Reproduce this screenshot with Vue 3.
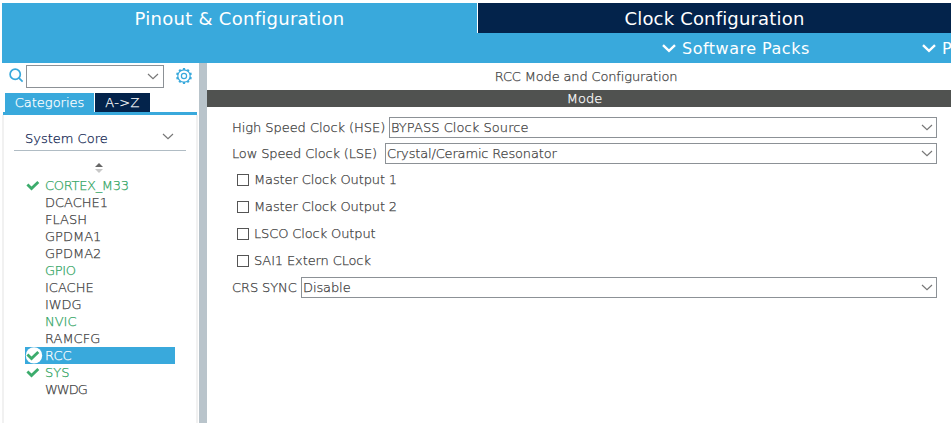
<script setup>
const items = [
  { name: 'CORTEX_M33', on: true, check: true, tight: 'tight-1' },
  { name: 'DCACHE1' },
  { name: 'FLASH' },
  { name: 'GPDMA1' },
  { name: 'GPDMA2' },
  { name: 'GPIO', on: true, tight: 'tight-1' },
  { name: 'ICACHE' },
  { name: 'IWDG', tight: 'tight-2' },
  { name: 'NVIC', on: true },
  { name: 'RAMCFG' },
  { name: 'RCC', selected: true, check: true },
  { name: 'SYS', on: true, check: true },
  { name: 'WWDG', tight: 'tight-3' },
]
const options = ['Master Clock Output 1', 'Master Clock Output 2', 'LSCO Clock Output', 'SAI1 Extern CLock']
const teeth = Array.from({ length: 10 }, (_, i) => i * 36)
</script>

<template>
  <div class="app">
    <header class="top">
      <div class="tabs">
        <div class="tab active"><span>Pinout &amp; Configuration</span></div>
        <div class="tab dark"><span>Clock Configuration</span></div>
      </div>
      <nav class="sub">
        <div class="menu packs">
          <svg width="14" height="9" viewBox="0 0 14 9"><path d="M1 1.2 L7 6.8 L13 1.2" /></svg>
          <span>Software Packs</span>
        </div>
        <div class="menu">
          <svg width="14" height="9" viewBox="0 0 14 9"><path d="M1 1.2 L7 6.8 L13 1.2" /></svg>
          <span>P</span>
        </div>
      </nav>
    </header>
    <div class="body">
      <aside class="side">
        <div class="search">
          <svg class="lens" width="15" height="15" viewBox="0 0 15 15"><circle cx="6.2" cy="6.2" r="5.1" /><path d="M9.8 9.8 L13.6 13.6" /></svg>
          <div class="box"><svg class="chev" width="12" height="7" viewBox="0 0 12 7"><path d="M1 1 L6 5.6 L11 1" /></svg></div>
          <svg class="gear" width="16" height="16" viewBox="0 0 16 16">
            <circle cx="8" cy="8" r="6.2" /><circle cx="8" cy="8" r="2.6" />
            <path v-for="a in teeth" :key="a" class="tooth" d="M6.9 1 H9.1" :transform="`rotate(${a} 8 8)`" />
          </svg>
        </div>
        <div class="subtabs">
          <div class="st cat"><span>Categories</span></div>
          <div class="st az"><span>A-&gt;Z</span></div>
        </div>
        <div class="rule"></div>
        <div class="panel">
          <div class="group">
            <span class="group-name">System Core</span>
            <svg class="chev" width="12" height="7" viewBox="0 0 12 7"><path d="M1 1 L6 5.6 L11 1" /></svg>
          </div>
          <svg class="sort" width="8" height="10" viewBox="0 0 8 10"><path d="M0 4 L4 0 L8 4Z" fill="#666" /><path d="M0 6 L4 10 L8 6Z" fill="#c8c8c8" /></svg>
          <ul class="list">
            <li v-for="it in items" :key="it.name" :class="[it.tight, { on: it.on, selected: it.selected }]">
              <span class="mark">
                <svg v-if="it.check" width="18" height="17" viewBox="0 0 18 17">
                  <circle v-if="it.selected" cx="9" cy="8.4" r="8.2" fill="#fff" />
                  <path d="M2.4 7.6 L6.5 11.6 L13.3 4.9" />
                </svg>
              </span>
              <span class="name">{{ it.name }}</span>
            </li>
          </ul>
        </div>
      </aside>
      <div class="divider"></div>
      <main class="main">
        <div class="title"><span>RCC Mode and Configuration</span></div>
        <div class="mode"><span>Mode</span></div>
        <div class="form">
          <div class="field">
            <label class="l-hse">High Speed Clock (HSE)</label>
            <div class="select"><span class="v-hse">BYPASS Clock Source</span><svg class="chev" width="12" height="7" viewBox="0 0 12 7"><path d="M1 1 L6 5.6 L11 1" /></svg></div>
          </div>
          <div class="field lse">
            <label class="l-lse">Low Speed Clock (LSE)</label>
            <div class="select"><span class="v-lse">Crystal/Ceramic Resonator</span><svg class="chev" width="12" height="7" viewBox="0 0 12 7"><path d="M1 1 L6 5.6 L11 1" /></svg></div>
          </div>
          <div class="checks">
            <div v-for="o in options" :key="o" class="opt"><i></i><span>{{ o }}</span></div>
          </div>
          <div class="field">
            <label class="l-crs">CRS SYNC</label>
            <div class="select"><span class="v-crs">Disable</span><svg class="chev" width="12" height="7" viewBox="0 0 12 7"><path d="M1 1 L6 5.6 L11 1" /></svg></div>
          </div>
        </div>
      </main>
    </div>
  </div>
</template>

<style>
body { background: #fff; overflow: hidden; }
</style>

<style scoped>
* { box-sizing: border-box; }
svg { display: block; flex: none; fill: none; }
.app { width: 951px; height: 423px; padding: 3px 0 0 2px; overflow: hidden; background: #fff; font: 200 13px/17px "DejaVu Sans", sans-serif; color: #404040; -webkit-text-stroke: 0.25px; display: flex; flex-direction: column; white-space: nowrap; }
.top { height: 60px; flex: none; background: #39a9dc; color: #fff; -webkit-text-stroke: 0; }
.tabs { display: flex; height: 30px; font-size: 18px; font-weight: 400; line-height: 32px; }
.tab { flex: none; text-align: center; height: 30px; }
.active { width: 475px; letter-spacing: 0.27px; }
.dark { width: 474px; background: #03234b; border-left: 1px solid #fff; letter-spacing: 0.17px; }
.sub { display: flex; height: 30px; padding-left: 660px; font-size: 16px; font-weight: 400; line-height: 32px; letter-spacing: 0.5px; }
.menu { display: flex; align-items: center; gap: 6px; flex: none; height: 31px; }
.menu path { stroke: #fff; stroke-width: 2.4; }
.packs { width: 260px; }
.body { display: flex; height: 360px; }
.side { width: 197px; flex: none; display: flex; flex-direction: column; }
.search { height: 30px; display: flex; align-items: flex-start; padding: 2px 0 0 7px; }
.lens { margin-top: 3px; stroke: #39a9dc; stroke-width: 1.7; }
.box { width: 138px; height: 23px; margin-left: 2px; border: 1px solid #8c9196; display: flex; align-items: center; justify-content: flex-end; padding-right: 4px; }
.chev { stroke: #777; stroke-width: 1.2; }
.gear { margin: 3px 0 0 12px; stroke: #39a9dc; stroke-width: 1.2; }
.tooth { stroke-width: 2; }
.subtabs { display: flex; gap: 1px; height: 19px; padding-left: 3px; color: #fff; line-height: 19px; }
.st { text-align: center; }
.cat { width: 89px; background: #39a9dc; }
.az { width: 55px; background: #03234b; letter-spacing: 0.4px; }
.rule { height: 3px; margin: 0 2px 0 1px; background: #39a9dc; }
.panel { width: 196px; height: 308px; border: solid #f1f1f1; border-width: 0 2px; }
.group { margin: 0 10px; height: 36px; border-bottom: 1px solid #b0bcc4; display: flex; justify-content: space-between; padding: 15px 12px 0 11px; color: #0f2350; line-height: 18px; }
.group .chev { margin-top: 3px; }
.sort { margin: 12px 0 0 91px; }
.list { list-style: none; margin: 4px 0 0 21px; padding: 0; width: 150px; }
li { display: flex; height: 17px; }
.tight-1 { letter-spacing: -0.3px; }
.tight-2 { letter-spacing: -0.1px; }
.tight-3 { letter-spacing: -1px; }
.mark { width: 20px; }
.mark path { stroke: #3cac6c; stroke-width: 2.8; }
.on { color: #2fa462; }
.selected { background: #39a9dc; color: #fff; }
.divider { width: 8px; flex: none; background: #b9c4cb; }
.main { width: 744px; flex: none; }
.title { height: 27px; line-height: 27px; text-align: center; padding-left: 14px; letter-spacing: -0.15px; }
.mode { height: 17px; background: #505250; color: #fff; text-align: center; padding-left: 11px; }
.form { padding: 10px 14px 0 25px; }
.field { display: flex; height: 21px; line-height: 21px; }
.field label { flex: none; }
.l-hse { width: 157px; letter-spacing: -0.05px; }
.l-lse { width: 153px; letter-spacing: -0.14px; }
.l-crs { width: 69px; letter-spacing: -0.1px; }
.lse { margin-top: 5px; }
.select { flex: 1; border: 1px solid #8c9196; display: flex; justify-content: space-between; align-items: center; padding: 0 3px 0 1px; line-height: 19px; }
.v-hse { letter-spacing: 0.06px; }
.v-lse { letter-spacing: -0.16px; }
.v-crs { letter-spacing: -0.1px; }
.checks { padding: 2px 0 3px 5px; }
.opt { height: 27px; display: flex; align-items: center; gap: 5px; letter-spacing: -0.12px; }
.opt i { width: 12px; height: 12px; border: 1px solid #555; }
</style>
